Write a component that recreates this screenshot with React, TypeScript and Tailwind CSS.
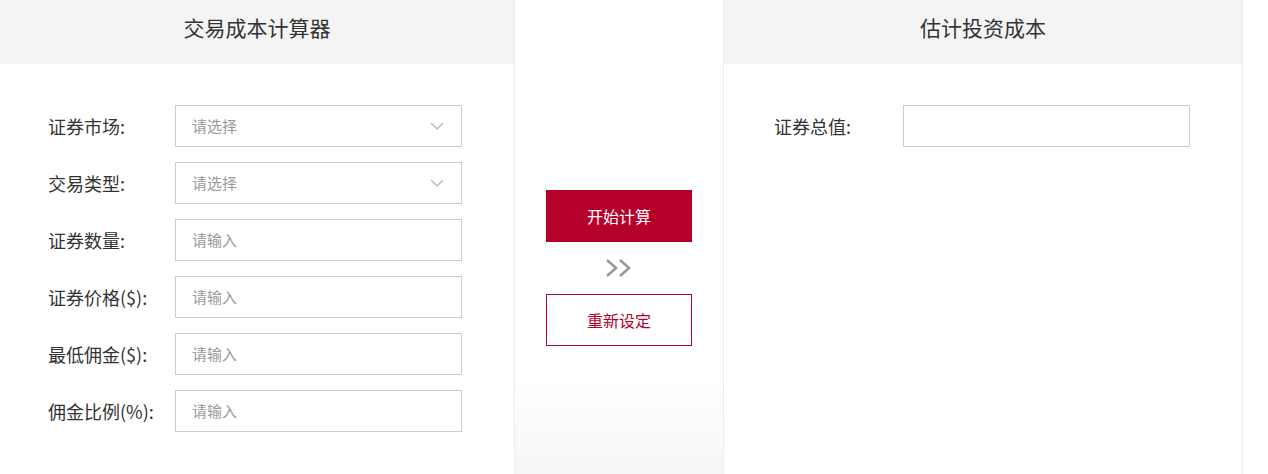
import React from "react";

const font = { fontFamily: '"Noto Sans CJK SC", "Noto Sans", sans-serif' };

function Chevron() {
  return (
    <svg width="14" height="8" viewBox="0 0 14 8" fill="none">
      <path d="M1 1l6 6 6-6" stroke="#b0b0b0" strokeWidth="1.2" />
    </svg>
  );
}

function Field({ label, placeholder, select }: { label: string; placeholder?: string; select?: boolean }) {
  return (
    <div className="flex items-center h-[42px]">
      <div className="w-[127px] text-[18px] text-[#333] leading-none">{label}</div>
      <div className="w-[287px] h-[42px] border border-[#cccccc] bg-white flex items-center justify-between pl-[16px] pr-[17px]">
        <span className="text-[15px] text-[#999]">{placeholder}</span>
        {select && <Chevron />}
      </div>
    </div>
  );
}

export default function App() {
  return (
    <div className="w-[1268px] h-[474px] bg-white flex overflow-hidden" style={font}>
      <div className="w-[515px] h-full border-r border-[#ececec] flex flex-col">
        <div className="h-[64px] bg-[#f4f4f4] pt-[14px] text-center leading-[26px] text-[21px] text-[#333]">交易成本计算器</div>
        <div className="pl-[48px] pt-[41px] flex flex-col gap-[15px]">
          <Field label="证券市场:" placeholder="请选择" select />
          <Field label="交易类型:" placeholder="请选择" select />
          <Field label="证券数量:" placeholder="请输入" />
          <Field label="证券价格($):" placeholder="请输入" />
          <Field label="最低佣金($):" placeholder="请输入" />
          <Field label="佣金比例(%):" placeholder="请输入" />
        </div>
      </div>
      <div className="w-[208px] h-full bg-[linear-gradient(to_bottom,#ffffff_80%,#f6f6f7)] flex flex-col items-center pt-[190px]">
        <div className="w-[146px] h-[52px] bg-[#b5002c] text-white text-[16px] flex items-center justify-center">开始计算</div>
        <div className="h-[52px] flex items-center justify-center">
          <svg width="28" height="20" viewBox="0 0 28 20" fill="none">
            <path d="M2 2l9 8-9 8M15 2l9 8-9 8" stroke="#999999" strokeWidth="2.6" />
          </svg>
        </div>
        <div className="w-[146px] h-[52px] border border-[#b5002c] bg-white text-[#b5002c] text-[16px] flex items-center justify-center">重新设定</div>
      </div>
      <div className="w-[520px] h-full border-l border-r border-[#ececec] flex flex-col">
        <div className="h-[64px] bg-[#f4f4f4] pt-[14px] text-center leading-[26px] text-[21px] text-[#333]">估计投资成本</div>
        <div className="pl-[50px] pt-[41px]">
          <div className="flex items-center h-[42px]">
            <div className="w-[129px] text-[18px] text-[#333] leading-none">证券总值:</div>
            <div className="w-[287px] h-[42px] border border-[#cccccc] bg-white"></div>
          </div>
        </div>
      </div>
      <div className="flex-1" />
    </div>
  );
}
